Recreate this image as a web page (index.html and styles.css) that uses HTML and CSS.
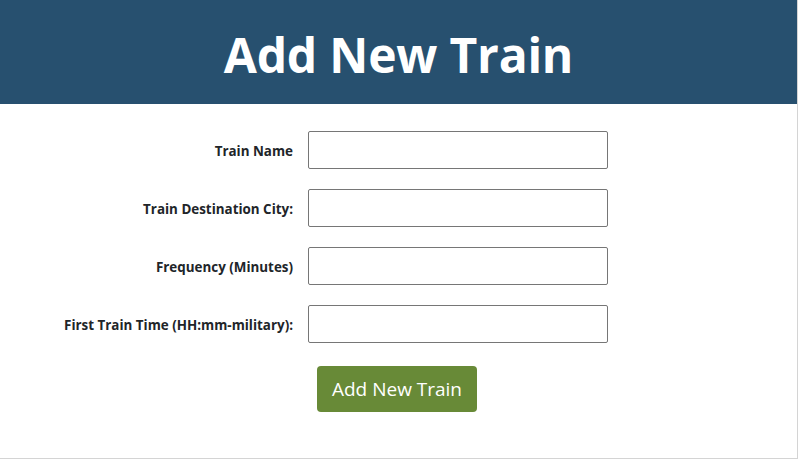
FILE: index.html
```html
<!DOCTYPE html>
<html>
<head>
<meta charset="utf-8">
<link rel="stylesheet" href="styles.css">
</head>
<body>
<div class="page">
  <header class="banner">
    <h1 class="title">Add New Train</h1>
  </header>
  <form class="form">
    <div class="grid">
      <label class="label" for="name">Train Name</label>
      <input class="input" id="name" type="text">
      <label class="label" for="dest">Train Destination City:</label>
      <input class="input" id="dest" type="text">
      <label class="label" for="freq">Frequency (Minutes)</label>
      <input class="input" id="freq" type="text">
      <label class="label" for="first">First Train Time (HH:mm-military):</label>
      <input class="input" id="first" type="text">
    </div>
    <div class="actions">
      <button class="btn" type="button">Add New Train</button>
    </div>
  </form>
</div>
</body>
</html>
```
FILE: styles.css
```css
html, body {
  margin: 0;
  padding: 0;
  background: #fff;
}
body {
  font-family: "Open Sans", "Noto Sans", sans-serif;
  color: #212529;
}
.page {
  width: 798px;
  height: 459px;
  box-sizing: border-box;
  border-right: 1px solid #d4d4d4;
  border-bottom: 1px solid #d4d4d4;
  overflow: hidden;
}
.banner {
  background: #27506f;
  height: 104px;
  display: flex;
  align-items: center;
  justify-content: center;
}
.title {
  margin: 0;
  color: #fff;
  font-size: 48px;
  font-weight: 700;
  line-height: 1;
  padding-top: 5px;
  letter-spacing: -0.2px;
}
.form {
  padding-top: 27px;
}
.grid {
  display: grid;
  grid-template-columns: 293px 300px;
  column-gap: 15px;
  row-gap: 20px;
  align-items: center;
}
.label {
  text-align: right;
  font-size: 13.4px;
  font-weight: 700;
  color: #212529;
  padding-top: 1px;
}
.input {
  box-sizing: border-box;
  width: 300px;
  height: 38px;
  margin: 0;
  border: 1px solid #767676;
  border-radius: 2px;
  background: #fff;
  font: inherit;
}
.actions {
  display: flex;
  justify-content: center;
  padding-top: 23px;
  padding-right: 4px;
}
.btn {
  width: 160px;
  height: 46px;
  background: #688a37;
  color: #fff;
  border: none;
  border-radius: 4px;
  font-family: "Open Sans", "Noto Sans", sans-serif;
  font-size: 19px;
  padding: 0 0 0 1px;
}
```
